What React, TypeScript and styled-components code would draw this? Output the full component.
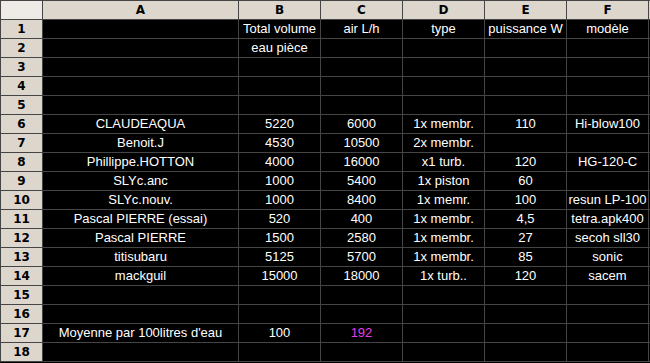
import { Fragment } from "react";
import styled, { createGlobalStyle } from "styled-components";

type Row = {
  a?: string;
  b?: string;
  c?: string;
  d?: string;
  e?: string;
  f?: string;
  highlight?: boolean;
};

const columns: string[] = ["A", "B", "C", "D", "E", "F", ""];

const rows: Row[] = [
  { b: "Total volume", c: "air L/h", d: "type", e: "puissance W", f: "modèle" },
  { b: "eau pièce" },
  {},
  {},
  {},
  { a: "CLAUDEAQUA", b: "5220", c: "6000", d: "1x membr.", e: "110", f: "Hi-blow100" },
  { a: "Benoit.J", b: "4530", c: "10500", d: "2x membr." },
  { a: "Phillippe.HOTTON", b: "4000", c: "16000", d: "x1 turb.", e: "120", f: "HG-120-C" },
  { a: "SLYc.anc", b: "1000", c: "5400", d: "1x piston", e: "60" },
  { a: "SLYc.nouv.", b: "1000", c: "8400", d: "1x memr.", e: "100", f: "resun LP-100" },
  { a: "Pascal PIERRE (essai)", b: "520", c: "400", d: "1x membr.", e: "4,5", f: "tetra.apk400" },
  { a: "Pascal PIERRE", b: "1500", c: "2580", d: "1x membr.", e: "27", f: "secoh sll30" },
  { a: "titisubaru", b: "5125", c: "5700", d: "1x membr.", e: "85", f: "sonic" },
  { a: "mackguil", b: "15000", c: "18000", d: "1x turb..", e: "120", f: "sacem" },
  {},
  {},
  { a: "Moyenne par 100litres d'eau", b: "100", c: "192", highlight: true },
  {},
];

export default function App() {
  return (
    <>
      <GlobalStyle />
      <Sheet>
        <Corner />
        {columns.map((col, i) => (
          <ColHeader key={`h${i}`}>{col}</ColHeader>
        ))}
        {rows.map((row, i) => (
          <Fragment key={i}>
            <RowHeader>{i + 1}</RowHeader>
            <Cell>{row.a}</Cell>
            <Cell>{row.b}</Cell>
            <Cell $accent={row.highlight}>{row.c}</Cell>
            <Cell>{row.d}</Cell>
            <Cell>{row.e}</Cell>
            <Cell>{row.f}</Cell>
            <Cell />
          </Fragment>
        ))}
      </Sheet>
    </>
  );
}

// Styled Components

const GlobalStyle = createGlobalStyle`
  html, body {
    margin: 0;
    padding: 0;
    background: #000;
    overflow: hidden;
  }
`;

const Sheet = styled.div`
  display: grid;
  grid-template-columns: 41px 195px repeat(5, 81px) 81px;
  grid-auto-rows: 18px;
  gap: 1px;
  padding: 1px 0 1px 1px;
  width: max-content;
  background-color: #454545;
  font-family: "Liberation Sans", Arial, sans-serif;
`;

const Corner = styled.div`
  background-color: #eeebe7;
`;

const ColHeader = styled.div`
  background-color: #dcd6cc;
  color: #000;
  font-family: "DejaVu Sans", sans-serif;
  font-weight: 700;
  font-size: 12px;
  line-height: 18px;
  text-align: center;
`;

const RowHeader = styled.div`
  background-color: #dcd6cc;
  color: #000;
  font-family: "DejaVu Sans", sans-serif;
  font-weight: 700;
  font-size: 12px;
  line-height: 18px;
  text-align: center;
`;

const Cell = styled.div<{ $accent?: boolean }>`
  background-color: #000;
  color: ${({ $accent }) => ($accent ? "#e83ce8" : "#fff")};
  font-size: 13px;
  line-height: 18px;
  text-align: center;
  white-space: nowrap;
  overflow: hidden;
`;
